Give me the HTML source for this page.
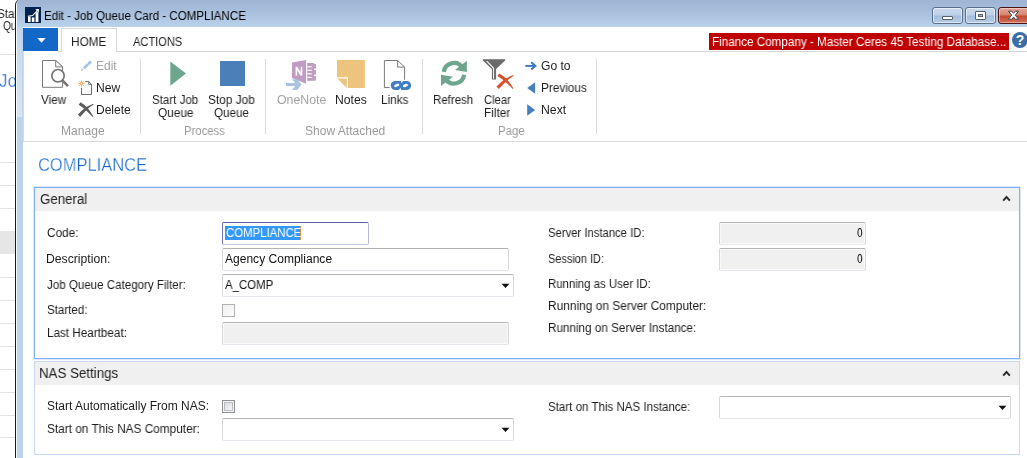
<!DOCTYPE html>
<html><head><meta charset="utf-8"><title>Edit - Job Queue Card - COMPLIANCE</title>
<style>
html,body{margin:0;padding:0;background:#fff;}
body{width:1027px;height:458px;overflow:hidden;font-family:"Liberation Sans",sans-serif;}
#root{position:relative;width:1027px;height:458px;overflow:hidden;background:#fff;}
#root div,#root svg,#root span{position:absolute;box-sizing:border-box;}
.t{will-change:transform;white-space:nowrap;transform-origin:0 0;line-height:normal;display:inline-block;font-family:"Liberation Sans",sans-serif;}
.hl{background:#e3e3e3;height:1px;left:0;width:15px;}
.sep{width:1px;background:#dcdcdc;top:59px;height:75px;}
.fld{border:1px solid #d4d7da;border-top-color:#b4b4b4;border-bottom-color:#e3e7ec;border-radius:2px;background:#fff;}
.ro{background:#f0f0f0;box-shadow:inset 0 0 0 1px #fafafa;}

</style></head>
<body>
<div id="root">
<div style="left:0;top:0;width:15px;height:458px;overflow:hidden">
<span class="t" id="t0" style="left:-2.98px;top:6.64px;font-size:12px;color:#222;transform:scaleX(0.9697);">Start</span>
<span class="t" id="t1" style="left:2.58px;top:18.64px;font-size:12px;color:#222;transform:scaleX(0.8475);">Qu</span>
<span class="t" id="t2" style="left:-1.22px;top:70.31px;font-size:19px;color:#0c60c6;transform:scaleX(0.8947);-webkit-text-stroke:0.38px #fff;">Jo</span>
</div>
<!-- background behind window -->
<div class="hl" style="top:54px"></div>
<div class="hl" style="top:162px"></div>
<div class="hl" style="top:185px"></div>
<div class="hl" style="top:208px"></div>
<div style="left:0;top:231px;width:15px;height:23px;background:#e6e6e6"></div>
<div class="hl" style="top:277px"></div>
<div class="hl" style="top:300px"></div>
<div class="hl" style="top:323px"></div>
<div class="hl" style="top:346px"></div>
<div class="hl" style="top:369px"></div>
<div class="hl" style="top:392px"></div>
<div class="hl" style="top:415px"></div>
<div class="hl" style="top:437px"></div>

<!-- window frame -->
<div id="frame" style="left:15px;top:-1px;width:1020px;height:470px;background:#bdd3ec;border-left:1px solid #1a1a1a;border-top-left-radius:6px;"></div>
<div id="titlebar" style="left:16px;top:-1px;width:1011px;height:28px;background:linear-gradient(#9db3d1 0%,#a6bddb 40%,#b4cbe7 80%,#b9d1ea 100%);border-top-left-radius:6px;"></div>
<div style="left:16px;top:4px;width:1px;height:460px;background:#f6f9fd"></div>
<!-- client area -->
<div id="client" style="left:23px;top:27px;width:1004px;height:431px;background:#fff"></div>

<div style="left:17px;top:27px;width:5px;height:90px;background:linear-gradient(#c0d5ed,#cbdcf0 35%,#d8e4f2)"></div>
<div style="left:23px;top:51px;width:1px;height:91px;background:#dadada"></div>
<!-- title icon -->
<svg style="left:25px;top:7px" width="16" height="16" viewBox="0 0 16 16">
<rect width="16" height="16" fill="#00234f"/>
<rect x="3" y="9.6" width="2.6" height="5.4" fill="#fff"/>
<rect x="6.8" y="10.4" width="2.6" height="4.6" fill="#fff"/>
<rect x="10.6" y="5.2" width="2.8" height="9.8" fill="#fff"/>
<path d="M2.8 9.2 L7.6 8.6 L12.6 3.4" stroke="#fff" stroke-width="1.1" fill="none"/>
<path d="M10.2 2.2 L14 2 L13.8 5.8 Z" fill="#fff"/>
</svg>

<!-- window buttons -->
<div class="wb" style="left:932px;top:7px;width:31px;height:17px;border:1px solid #5a6f8c;border-radius:3px;background:linear-gradient(#c9d9ec 0%,#bdd0e8 48%,#a2bcdb 52%,#b7cde6 100%);box-shadow:inset 0 0 0 1px rgba(255,255,255,.55)"></div>
<div style="left:942px;top:16px;width:11px;height:4px;background:#fff;border:1px solid #56606d;border-radius:1px"></div>
<div class="wb" style="left:965px;top:7px;width:31px;height:17px;border:1px solid #5a6f8c;border-radius:3px;background:linear-gradient(#c9d9ec 0%,#bdd0e8 48%,#a2bcdb 52%,#b7cde6 100%);box-shadow:inset 0 0 0 1px rgba(255,255,255,.55)"></div>
<div style="left:975px;top:11px;width:11px;height:9px;background:#fff;border:1px solid #56606d;border-radius:1px"></div>
<div style="left:978px;top:14px;width:5px;height:3px;background:#9fb6d2;border:1px solid #56606d;"></div>
<div class="wb" style="left:998px;top:7px;width:40px;height:17px;border:1px solid #4c1212;border-radius:3px;background:linear-gradient(#e4a898 0%,#d6836d 48%,#c2472c 52%,#d0735a 100%);box-shadow:inset 0 0 0 1px rgba(255,255,255,.4)"></div>
<svg style="left:1006px;top:9px" width="15" height="13" viewBox="1006 9 15 13"><path d="M1008.4 11.2 L1011.8 11.2 L1013.5 13.3 L1015.2 11.2 L1018.6 11.2 L1015.3 15.2 L1018.6 19.2 L1015.2 19.2 L1013.5 17.1 L1011.8 19.2 L1008.4 19.2 L1011.7 15.2 Z" fill="#fff" stroke="#45464e" stroke-width="1" stroke-linejoin="round"/></svg>

<!-- app button + tabs -->
<div style="left:23px;top:28px;width:35px;height:23px;background:#1267c7"></div>
<svg style="left:36px;top:37px" width="11" height="7" viewBox="0 0 11 7"><path d="M1.3 1 L9.7 1 L5.5 5.8 Z" fill="#fff"/></svg>
<div style="left:58px;top:51px;width:969px;height:1px;background:#d6d6d6"></div>
<div style="left:61px;top:28px;width:56px;height:24px;border:1px solid #d6d6d6;border-bottom:none;background:#fff"></div>

<!-- banner -->
<div style="left:709px;top:33px;width:300px;height:17px;background:#c00000"></div>
<svg style="left:1012px;top:32px" width="16" height="16" viewBox="0 0 16 16"><circle cx="8" cy="8" r="8" fill="#3a6ea5"/><text x="8" y="13" font-size="14" font-weight="bold" font-family="Liberation Sans" fill="#fff" text-anchor="middle">?</text></svg>

<!-- ribbon separators + bottom line -->
<div class="sep" style="left:140px"></div>
<div class="sep" style="left:265px"></div>
<div class="sep" style="left:422px"></div>
<div class="sep" style="left:596px"></div>
<div style="left:23px;top:141px;width:1004px;height:1px;background:#dadada"></div>

<!-- ICONS_BEGIN -->
<!-- View icon -->
<svg style="left:38px;top:56px" width="34" height="36" viewBox="38 56 34 36">
<path d="M55.7 60.5 H42.5 V87.3 H62.6 V66.9 Z" fill="#fff" stroke="#7a7a7a" stroke-width="1"/>
<path d="M55.7 60.5 V66.9 H62.6 Z" fill="#fff" stroke="#7a7a7a" stroke-width="1" stroke-linejoin="miter"/>
<circle cx="58" cy="75.7" r="6.2" fill="#fff" stroke="#757575" stroke-width="1.7"/>
<path d="M62.4 80.4 L68 86.2" stroke="#757575" stroke-width="2.6" stroke-linecap="butt"/>
</svg>
<!-- Edit pencil (disabled) -->
<svg style="left:79px;top:59px" width="14" height="14" viewBox="79 59 14 14">
<path d="M83.9 68.2 L87.9 64.4" stroke="#a9c4e1" stroke-width="2.9" stroke-linecap="butt"/>
<path d="M80.9 71 L82 68.2 L83.7 69.9 Z" fill="#a9c4e1"/>
<path d="M89.1 63.3 L90.1 62.3" stroke="#a9c4e1" stroke-width="3" stroke-linecap="round"/>
</svg>
<!-- New icon -->
<svg style="left:76px;top:78px" width="18" height="18" viewBox="76 78 18 18">
<path d="M85.2 81.5 H88.7 L91.5 84.3 V94.5 H81.5 V87.8" fill="none" stroke="#6e6e6e" stroke-width="1"/>
<path d="M88.7 81.5 V84.3 H91.5" fill="none" stroke="#6e6e6e" stroke-width="1"/>
<g stroke="#f2a844" stroke-width="0.85" stroke-linecap="butt">
<path d="M81.4 80.3 V86.9 M78.1 83.6 H84.7 M79.1 81.3 L83.7 85.9 M83.7 81.3 L79.1 85.9"/>
</g>
<circle cx="81.4" cy="83.6" r="1.2" fill="#fff" stroke="#f2a844" stroke-width="0.8"/>
</svg>
<!-- Delete X -->
<svg style="left:76px;top:101px" width="20" height="18" viewBox="76 101 20 18">
<path d="M78.7 104.7 L80.5 102.3 Q84 104.4 87.2 107.5 Q90.6 111.5 93.4 116.5 L92.7 117.1 Q89 113 85.2 109.4 Q82 107 78.7 104.7 Z" fill="#5c5c5c"/>
<path d="M77.9 114.5 Q82 110.4 85.4 107.5 Q89.5 105.2 93.2 103.7 L93.6 104.4 Q90 106.6 87 109.5 Q83.6 113 80.1 116.9 Z" fill="#5c5c5c"/>
</svg>
<!-- Start (play) -->
<svg style="left:168px;top:59px" width="20" height="29" viewBox="168 59 20 29">
<path d="M170.3 61.4 L186 73.6 L170.3 85.8 Z" fill="#6ea58e"/>
</svg>
<!-- Stop -->
<div style="left:220px;top:61px;width:25px;height:25px;background:#4a7fb8"></div>
<!-- OneNote (disabled) -->
<svg style="left:284px;top:58px" width="34" height="34" viewBox="284 58 34 34">
<path d="M292 62.6 L306 60 V83.7 L292 77.9 Z" fill="#c09cc5"/>
<rect x="307.1" y="63" width="7" height="17.8" fill="#c09cc5"/>
<rect x="314.1" y="64" width="1.9" height="4.6" fill="#c09cc5"/>
<rect x="314.1" y="70" width="1.9" height="4.6" fill="#c09cc5"/>
<rect x="314.1" y="76" width="1.9" height="4.6" fill="#c09cc5"/>
<g fill="#fff"><rect x="307.1" y="66.2" width="4.6" height="1.2"/><rect x="307.1" y="69.7" width="4.6" height="1.2"/><rect x="307.1" y="73.2" width="4.6" height="1.2"/><rect x="307.1" y="76.8" width="4.6" height="1.2"/></g>
<path d="M295.6 75.8 V66.8 H297.3 L300.7 72.6 V66.8 H302.3 V75.8 H300.6 L297.2 70 V75.8 Z" fill="#fff"/>
<path d="M286 83 H295.3 L292 79.2 H297.2 L301.6 84.5 L297.2 90 H292 L295.3 86 H286 Z" fill="#a9c5e0"/>
</svg>
<!-- Notes -->
<svg style="left:336px;top:59px" width="30" height="30" viewBox="336 59 30 30">
<path d="M337 60 H364.9 V87.9 H348 V77.2 H337 Z" fill="#ecc47e"/>
<path d="M337.4 78.5 H346.8 V87.9 Z" fill="#ecc47e"/>
</svg>
<!-- Links -->
<svg style="left:382px;top:58px" width="32" height="34" viewBox="382 58 32 34">
<path d="M389.6 87.5 H384.4 V60.5 H397.6 L404.6 67.1 V79.8" fill="none" stroke="#7a7a7a" stroke-width="1"/>
<path d="M397.6 60.5 V67.1 H404.6" fill="none" stroke="#7a7a7a" stroke-width="1"/>
<rect x="390.8" y="80.9" width="20.3" height="9.1" rx="4.55" fill="#3f7fc4"/>
<rect x="394.1" y="84.1" width="5.2" height="2.6" rx="1.3" fill="#fff" transform="rotate(-22 396.7 85.4)"/>
<rect x="402.8" y="84.2" width="5.2" height="2.6" rx="1.3" fill="#fff" transform="rotate(-22 405.4 85.5)"/>
<path d="M400.6 80.4 H403.4 L401.6 83.2 Z" fill="#fff"/>
<path d="M398.6 90.5 H401.4 L400.4 87.8 Z" fill="#fff"/>
</svg>
<!-- Refresh -->
<svg style="left:439px;top:58px" width="30" height="31" viewBox="439 58 30 31">
<g fill="none" stroke="#6ea58e" stroke-width="4.3">
<path d="M443.8 71.9 A10.25 10.25 0 0 1 462.2 67.2"/>
<path d="M464.1 74.7 A10.25 10.25 0 0 1 445.7 79.4"/>
</g>
<path d="M466.9 60.7 V71.9 L455 69.9 Z" fill="#6ea58e"/>
<path d="M441 85.9 V74.7 L452.9 76.7 Z" fill="#6ea58e"/>
</svg>
<!-- Clear filter -->
<svg style="left:481px;top:57px" width="34" height="34" viewBox="481 57 34 34">
<path d="M482.8 59.2 H505.1 V60.4 L496.1 69 V79.6 H491.9 V69 L482.8 60.4 Z" fill="#6a6a6a"/>
<path d="M486.2 61.3 L493.1 68.5 V78.7 H494.1 V68.1 L487.2 60.8 Z" fill="#fff"/>
<g transform="translate(505.6 80.5) scale(1.1 1.05) translate(-86.2 -108.9)">
<path d="M78.7 104.7 L80.5 102.3 Q84 104.4 87.2 107.5 Q90.6 111.5 93.4 116.5 L92.7 117.1 Q89 113 85.2 109.4 Q82 107 78.7 104.7 Z" fill="#d6552f"/>
<path d="M77.9 114.5 Q82 110.4 85.4 107.5 Q89.5 105.2 93.2 103.7 L93.6 104.4 Q90 106.6 87 109.5 Q83.6 113 80.1 116.9 Z" fill="#d6552f"/>
</g>
</svg>
<!-- Go to / Prev / Next -->
<svg style="left:524px;top:60px" width="14" height="12" viewBox="524 60 14 12">
<path d="M525.3 65.9 H535" stroke="#3b78c0" stroke-width="1.9" fill="none"/>
<path d="M531.2 62.3 L535.4 65.9 L531.2 69.5" stroke="#3b78c0" stroke-width="2" fill="none"/>
</svg>
<svg style="left:526px;top:81px" width="11" height="14" viewBox="526 81 11 14"><path d="M535.1 82.2 V93.8 L527.2 88 Z" fill="#457fbe"/></svg>
<svg style="left:526px;top:103px" width="11" height="14" viewBox="526 103 11 14"><path d="M527.2 104.2 V115.7 L535.1 110 Z" fill="#457fbe"/></svg>
<!-- ICONS_END -->

<!-- General panel -->
<div style="left:33px;top:186px;width:988px;height:174px;border:1px solid #dce8fa;"></div>
<div style="left:34px;top:361px;width:986px;height:94px;border:1px solid #c3d9f4;background:#fff"></div>
<div style="left:34px;top:187px;width:986px;height:172px;border:1px solid #7fb1f6;background:#fff"></div>
<div style="left:35px;top:188px;width:984px;height:23px;background:#f0f0f0"></div>
<div style="left:35px;top:362px;width:984px;height:23px;background:#f0f0f0"></div>
<svg style="left:1002px;top:195px" width="9" height="7" viewBox="0 0 9 7"><path d="M1.2 5.6 L4.5 2 L7.8 5.6" stroke="#2b2b2b" stroke-width="1.9" fill="none"/></svg>
<svg style="left:1002px;top:370px" width="9" height="7" viewBox="0 0 9 7"><path d="M1.2 5.6 L4.5 2 L7.8 5.6" stroke="#2b2b2b" stroke-width="1.9" fill="none"/></svg>

<!-- fields: General left -->
<div class="fld" style="left:222px;top:222px;width:147px;height:23px;border-color:#5c5fa8 #b5b8dc #c5c8e4 #7073b4;"></div>
<div style="left:225px;top:226px;width:75px;height:14px;background:#3399ff"></div>
<div style="left:300px;top:226px;width:1px;height:14px;background:#e08a2a"></div>
<div class="fld" style="left:222px;top:248px;width:287px;height:23px"></div>
<div class="fld" style="left:222px;top:274px;width:292px;height:23px"></div>
<svg style="left:501px;top:283px" width="9" height="6" viewBox="0 0 9 6"><path d="M0.5 0.8 L8.5 0.8 L4.5 5 Z" fill="#111"/></svg>
<div style="left:222px;top:304px;width:13px;height:13px;border:1px solid #b2b2b2;background:linear-gradient(135deg,#f0f0f0,#fbfbfb)"></div>
<div class="fld ro" style="left:222px;top:322px;width:287px;height:23px"></div>
<!-- fields: General right -->
<div class="fld ro" style="left:719px;top:222px;width:147px;height:23px"></div>
<div class="fld ro" style="left:719px;top:248px;width:147px;height:23px"></div>
<!-- NAS -->
<div style="left:222px;top:400px;width:13px;height:13px;border:1px solid #8e8f8f;background:#f4f4f4"></div>
<div style="left:224px;top:402px;width:9px;height:9px;border:1px solid #b9bcc0;background:linear-gradient(135deg,#d8dadc,#f6f6f6)"></div>
<div class="fld" style="left:222px;top:418px;width:292px;height:23px"></div>
<svg style="left:501px;top:427px" width="9" height="6" viewBox="0 0 9 6"><path d="M0.5 0.8 L8.5 0.8 L4.5 5 Z" fill="#111"/></svg>
<div class="fld" style="left:719px;top:396px;width:292px;height:23px"></div>
<svg style="left:998px;top:405px" width="9" height="6" viewBox="0 0 9 6"><path d="M0.5 0.8 L8.5 0.8 L4.5 5 Z" fill="#111"/></svg>

<span class="t" id="t3" style="left:44.44px;top:8.74px;font-size:12px;color:#000;transform:scaleX(0.9639);">Edit - Job Queue Card - COMPLIANCE</span>
<span class="t" id="t4" style="left:71.22px;top:34.74px;font-size:12px;color:#222;transform:scaleX(0.9797);">HOME</span>
<span class="t" id="t5" style="left:132.80px;top:34.74px;font-size:12px;color:#222;transform:scaleX(0.9232);">ACTIONS</span>
<span class="t" id="t6" style="left:711.83px;top:34.74px;font-size:12px;color:#fff;transform:scaleX(0.9724);">Finance Company - Master Ceres 45 Testing Database...</span>
<span class="t" id="t7" style="left:40.60px;top:93.14px;font-size:12px;color:#1e1e1e;transform:scaleX(0.9709);">View</span>
<span class="t" id="t8" style="left:95.62px;top:58.84px;font-size:12px;color:#a3a3a3;transform:scaleX(0.9823);">Edit</span>
<span class="t" id="t9" style="left:95.59px;top:80.94px;font-size:12px;color:#1e1e1e;transform:scaleX(1.0087);">New</span>
<span class="t" id="t10" style="left:95.61px;top:103.04px;font-size:12px;color:#1e1e1e;transform:scaleX(0.9925);">Delete</span>
<span class="t" id="t11" style="left:61.19px;top:123.74px;font-size:12px;color:#9a9a9a;transform:scaleX(1.0071);">Manage</span>
<span class="t" id="t12" style="left:152.12px;top:93.14px;font-size:12px;color:#1e1e1e;transform:scaleX(0.9617);">Start Job</span>
<span class="t" id="t13" style="left:158.01px;top:105.94px;font-size:12px;color:#1e1e1e;transform:scaleX(0.9857);">Queue</span>
<span class="t" id="t14" style="left:207.51px;top:93.14px;font-size:12px;color:#1e1e1e;transform:scaleX(0.9871);">Stop Job</span>
<span class="t" id="t15" style="left:214.11px;top:105.94px;font-size:12px;color:#1e1e1e;transform:scaleX(0.9714);">Queue</span>
<span class="t" id="t16" style="left:183.86px;top:123.74px;font-size:12px;color:#9a9a9a;transform:scaleX(0.9429);">Process</span>
<span class="t" id="t17" style="left:276.89px;top:93.14px;font-size:12px;color:#a3a3a3;transform:scaleX(1.0255);">OneNote</span>
<span class="t" id="t18" style="left:334.79px;top:93.14px;font-size:12px;color:#1e1e1e;transform:scaleX(1.0133);">Notes</span>
<span class="t" id="t19" style="left:381.02px;top:93.14px;font-size:12px;color:#1e1e1e;transform:scaleX(0.9774);">Links</span>
<span class="t" id="t20" style="left:305.40px;top:123.74px;font-size:12px;color:#9a9a9a;transform:scaleX(1.0032);">Show Attached</span>
<span class="t" id="t21" style="left:433.34px;top:93.14px;font-size:12px;color:#1e1e1e;transform:scaleX(0.9565);">Refresh</span>
<span class="t" id="t22" style="left:483.53px;top:93.14px;font-size:12px;color:#1e1e1e;transform:scaleX(0.9357);">Clear</span>
<span class="t" id="t23" style="left:484.02px;top:105.94px;font-size:12px;color:#1e1e1e;transform:scaleX(0.9804);">Filter</span>
<span class="t" id="t24" style="left:541.30px;top:59.04px;font-size:12px;color:#1e1e1e;transform:scaleX(1.0070);">Go to</span>
<span class="t" id="t25" style="left:540.82px;top:81.14px;font-size:12px;color:#1e1e1e;transform:scaleX(0.9812);">Previous</span>
<span class="t" id="t26" style="left:540.78px;top:102.94px;font-size:12px;color:#1e1e1e;transform:scaleX(1.0213);">Next</span>
<span class="t" id="t27" style="left:497.55px;top:123.74px;font-size:12px;color:#9a9a9a;transform:scaleX(0.9547);">Page</span>
<span class="t" id="t28" style="left:37.81px;top:154.46px;font-size:18.5px;color:#0c60c6;transform:scaleX(0.8913);-webkit-text-stroke:0.38px #fff;">COMPLIANCE</span>
<span class="t" id="t29" style="left:39.89px;top:191.23px;font-size:14px;color:#222;transform:scaleX(0.9472);">General</span>
<span class="t" id="t30" style="left:39.45px;top:365.23px;font-size:14px;color:#222;transform:scaleX(0.9505);">NAS Settings</span>
<span class="t" id="t31" style="left:47.01px;top:226.14px;font-size:12px;color:#1c1c1c;transform:scaleX(0.9836);">Code:</span>
<span class="t" id="t32" style="left:46.48px;top:252.44px;font-size:12px;color:#1c1c1c;transform:scaleX(1.0171);">Description:</span>
<span class="t" id="t33" style="left:47.26px;top:278.34px;font-size:12px;color:#1c1c1c;transform:scaleX(0.9632);">Job Queue Category Filter:</span>
<span class="t" id="t34" style="left:47.02px;top:302.84px;font-size:12px;color:#1c1c1c;transform:scaleX(0.9630);">Started:</span>
<span class="t" id="t35" style="left:46.53px;top:326.44px;font-size:12px;color:#1c1c1c;transform:scaleX(0.9738);">Last Heartbeat:</span>
<span class="t" id="t36" style="left:548.03px;top:226.14px;font-size:12px;color:#1c1c1c;transform:scaleX(0.9393);">Server Instance ID:</span>
<span class="t" id="t37" style="left:548.04px;top:251.94px;font-size:12px;color:#1c1c1c;transform:scaleX(0.9121);">Session ID:</span>
<span class="t" id="t38" style="left:547.55px;top:277.14px;font-size:12px;color:#1c1c1c;transform:scaleX(0.9509);">Running as User ID:</span>
<span class="t" id="t39" style="left:547.51px;top:299.14px;font-size:12px;color:#1c1c1c;transform:scaleX(0.9927);">Running on Server Computer:</span>
<span class="t" id="t40" style="left:547.53px;top:321.14px;font-size:12px;color:#1c1c1c;transform:scaleX(0.9747);">Running on Server Instance:</span>
<span class="t" id="t41" style="left:47.00px;top:399.14px;font-size:12px;color:#1c1c1c;transform:scaleX(0.9981);">Start Automatically From NAS:</span>
<span class="t" id="t42" style="left:47.01px;top:422.14px;font-size:12px;color:#1c1c1c;transform:scaleX(0.9850);">Start on This NAS Computer:</span>
<span class="t" id="t43" style="left:548.12px;top:399.64px;font-size:12px;color:#1c1c1c;transform:scaleX(0.9621);">Start on This NAS Instance:</span>
<span class="t" id="t44" style="left:225.53px;top:226.14px;font-size:12px;color:#fff;transform:scaleX(0.9490);">COMPLIANCE</span>
<span class="t" id="t45" style="left:224.70px;top:252.44px;font-size:12px;color:#111;transform:scaleX(1.0033);">Agency Compliance</span>
<span class="t" id="t46" style="left:224.70px;top:278.34px;font-size:12px;color:#111;transform:scaleX(0.9500);">A_COMP</span>
<span class="t" id="t47" style="left:856.98px;top:226.14px;font-size:12px;color:#000;transform:scaleX(0.8348);">0</span>
<span class="t" id="t48" style="left:856.98px;top:251.94px;font-size:12px;color:#000;transform:scaleX(0.8348);">0</span>
</div>
</body></html>
